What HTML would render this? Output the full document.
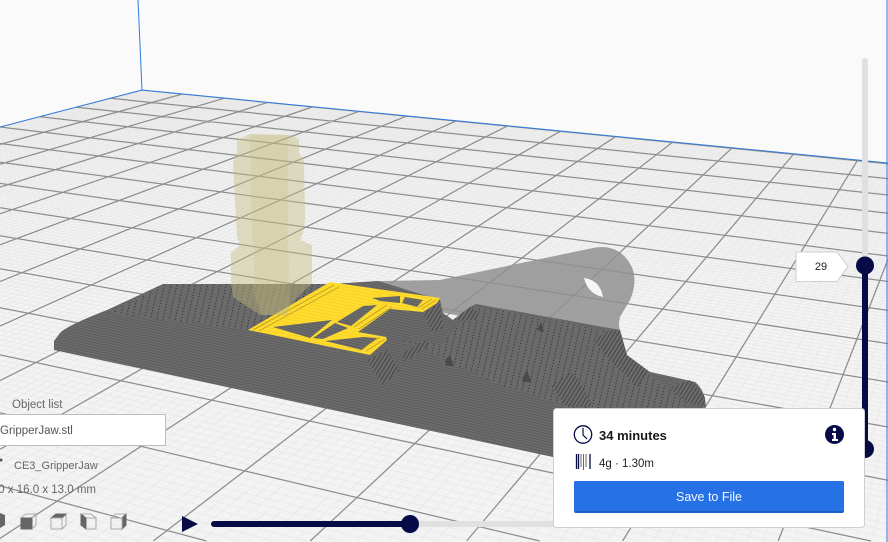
<!DOCTYPE html>
<html><head><meta charset="utf-8">
<style>
html,body{margin:0;padding:0;background:#fafafa;width:888px;height:542px;overflow:hidden}
svg{display:block;position:absolute;left:0;top:0;overflow:hidden}
text{font-family:"Liberation Sans",sans-serif}
</style></head>
<body>
<svg id="s" width="888" height="542" viewBox="0 0 888 542" xmlns="http://www.w3.org/2000/svg">
<defs>
<clipPath id="fl"><polygon points="142,90 888,163 888,542 0,542 0,127"/></clipPath>
<pattern id="st" width="2.600" height="2.600" patternUnits="userSpaceOnUse" patternTransform="rotate(13)">
<rect width="2.600" height="2.600" fill="#6c6c6c"/><rect width="2.600" height=".9" fill="#5c5c5c"/></pattern>
<pattern id="dt" width="6" height="3" patternUnits="userSpaceOnUse" patternTransform="rotate(13)">
<rect width="6" height="3" fill="#6c6c6c"/><rect width="6" height=".7" fill="#666"/><rect x="2" y="1" width="1" height="1" fill="#2a2a2a"/></pattern>
<pattern id="dw" width="3.400" height="3.400" patternUnits="userSpaceOnUse" patternTransform="rotate(-58)">
<rect width="3.400" height="3.400" fill="#6e6e6e"/><rect width="3.400" height="1.300" fill="#4a4a4a"/></pattern>
<pattern id="yl" width="3" height="3" patternUnits="userSpaceOnUse" patternTransform="rotate(10)">
<rect width="3" height="3" fill="#ffdd2e"/><rect width="3" height=".7" fill="#f6cb26"/></pattern>
</defs>
<rect width="888" height="542" fill="#fafafa"/>
<polygon points="142,90 888,163 888,542 0,542 0,127" fill="#f3f3f3"/>
<g clip-path="url(#fl)" fill="none">
<path id="mn" stroke="#e8e8e8" stroke-width=".8"/>
<path id="mj" stroke="#8d8d8d" stroke-width="1.250"/>
</g>
<path d="M138 0L142 90L888 163M142 90L0 127M887 0V542" fill="none" stroke="#2f7be0" stroke-width="1"/>

<!-- translucent rear part -->
<path d="M378 281L440 280L593 248Q603 246 610 248Q626 252 633 270Q637 284 630 300L620 317Q618 325 620 330L480 320L380 300Z" fill="rgb(145,145,145)" fill-opacity=".85"/>
<path d="M584 278Q600 280 603 297Q588 294 584 278Z" fill="#f6f6f6"/>
<!-- plate -->
<path d="M163 284L330 284L378 281L440 300L443 313L453 320L470 307L476 304L620 330L627 355Q634 367 650 372L673 377L695 382Q705 390 706 407L553 457L427 430L323 408L227 387L54 350L54 341L60 333Q66 326 107 310Z" fill="url(#st)"/>
<polygon points="163,284 330,284 250,330 107,313 140,297" fill="url(#dt)"/>
<polygon points="400,340 440,345 476,306 618,332 622,352 650,375 690,405 610,420 500,385" fill="url(#dt)"/>
<polygon points="593,340 610,330 620,330 627,355 650,372 637,387 613,363" fill="url(#dw)"/>
<polygon points="550,385 570,373 577,377 593,407 567,407" fill="url(#dw)"/>
<polygon points="670,388 690,380 705,397 705,407 687,403" fill="url(#dw)"/>
<polygon points="453,320 470,307 478,312 478,320" fill="url(#dw)"/>
<polygon points="423,313 440,303 443,328 432,332" fill="url(#dw)"/>
<polygon points="367,360 387,350 400,370 383,385" fill="url(#dw)"/>
<polygon points="400,355 425,340 430,345 405,362" fill="url(#dw)"/>
<polygon points="537,330 541,322 544,332" fill="#4a4a4a"/>
<polygon points="445,360 450,355 454,366 446,366" fill="#4a4a4a"/>
<polygon points="523,377 527,370 531,382 522,382" fill="#4a4a4a"/>
<!-- yellow layer -->
<path fill-rule="evenodd" fill="url(#yl)" d="M330 282L440 298L437 303L423 312L390 309L358 332L386 337L387 340L370 355L248 330Z
M273 327L332 320L310 338Z M313 338L335 323L348 328L323 339Z M325 341L363 337L377 338L362 350Z M337 322L363 306L377 305L351 326Z M372 298L400 296L400 303L380 301Z M405 297L423 300L417 307L402 303Z"/>
<path d="M253 330L334 285M259 331L339 287M366 351L385 339M360 350L380 337M422 309L436 300M418 308L432 299M354 327L387 305M359 329L392 307" fill="none" stroke="#a58d22" stroke-width=".7"/>
<!-- ghost column -->
<path d="M237 140L250 134L293 135L299 140L299 153L304 160L305 220L303 233L300 240L312 245L312 283L292 303L287 315L260 315L233 297L231 283L231 253L240 245L237 237L233 163L237 153Z" fill="rgb(197,188,126)" fill-opacity=".42"/>
<path d="M250 134L288 135L288 240L290 303L286 315L262 315L254 295L254 245L252 240Z" fill="rgb(197,186,124)" fill-opacity=".22"/>

<!-- vertical slider -->
<path d="M862 61a3 3 0 0 1 6 0V265H862Z" fill="#e0e0e0"/>
<rect x="862" y="265" width="6" height="185" fill="#060a45"/>
<circle cx="865" cy="265.500" r="9" fill="#060a45"/>
<circle cx="865" cy="449" r="9" fill="#060a45"/>
<path d="M796 252H837L848 266.500L837 281.500H796Z" fill="#fff" stroke="#cfcfcf" stroke-width="1"/>
<text x="821" y="270" font-size="11" text-anchor="middle" fill="#222">29</text>

<!-- horizontal slider -->
<polygon points="182,516 198,524 182,532" fill="#060a45"/>
<rect x="410" y="521" width="150" height="6" fill="#e0e0e0"/>
<rect x="211" y="521" width="200" height="6" rx="3" fill="#060a45"/>
<circle cx="410" cy="524" r="9" fill="#060a45"/>

<!-- left panel -->
<text x="12" y="408" font-size="11.500" fill="#666">Object list</text>
<rect x="0" y="414.500" width="165.500" height="31" fill="#fff"/>
<path d="M0 414.500H165.500V445.500H0" fill="none" stroke="#bdbdbd"/>
<text x="0" y="434" font-size="11.500" fill="#555">GripperJaw.stl</text>
<circle cx="1" cy="460" r="1.500" fill="#555"/>
<text x="14" y="469" font-size="11" fill="#666">CE3_GripperJaw</text>
<text x="96" y="493" font-size="11.500" fill="#666" text-anchor="end">0 x 16.0 x 13.0 mm</text>
<g stroke-width="1">
<path d="M0 513L5 515V525L0 528Z" fill="#666"/>
<g transform="translate(20,513)"><path d="M1 5H12V16H1Z" fill="#666" stroke="#666"/><path d="M1 5L6 1H16V12L12 16M12 5L16 1" fill="none" stroke="#aaa"/></g>
<g transform="translate(50,513)"><path d="M1 5L6 1H16L12 5Z" fill="#666" stroke="#666"/><path d="M1 5H12V16H1ZM16 1V12L12 16" fill="none" stroke="#aaa"/></g>
<g transform="translate(80,513)"><path d="M1 1L6 5V16L1 12Z" fill="#666" stroke="#666"/><path d="M1 1H11L16 5H6M16 5V16H6" fill="none" stroke="#aaa"/></g>
<g transform="translate(110,513)"><path d="M12 5L16 1V12L12 16Z" fill="#666" stroke="#666"/><path d="M1 5H12V16H1ZM1 5L6 1H16" fill="none" stroke="#aaa"/></g>
</g>

<!-- print card -->
<rect x="553.500" y="408.500" width="311" height="119" rx="3" fill="#fff" stroke="#cfcfcf"/>
<circle cx="583" cy="434.500" r="8.700" fill="none" stroke="#060a45" stroke-width="1.300"/>
<path d="M583 428V435L587 439" fill="none" stroke="#060a45" stroke-width="1.200"/>
<text x="599" y="440" font-size="13" font-weight="700" fill="#1a1a1a">34 minutes</text>
<circle cx="834.500" cy="434.500" r="9.500" fill="#060a45"/>
<circle cx="834.500" cy="429.500" r="1.700" fill="#fff"/>
<path d="M832 433H836V439H838V441H832V439H833.500V435H832Z" fill="#fff"/>
<path d="M576.500 454V469M578.500 454V469" stroke="#060a45" stroke-width="1.300" fill="none"/>
<path d="M581 454V467M583.500 454V470M586 454V467" stroke="#555" stroke-width=".9" fill="none"/>
<path d="M590 454V469" stroke="#060a45" stroke-width="1.300" fill="none"/>
<text x="599" y="467" font-size="11.500" fill="#222">4g · 1.30m</text>
<rect x="574" y="481" width="270" height="32" rx="2" fill="#1f5fc8"/>
<path d="M574 483a2 2 0 0 1 2-2H842a2 2 0 0 1 2 2V511H574Z" fill="#2671e6"/>
<text x="709" y="501" font-size="12.500" fill="#f4f7ff" text-anchor="middle">Save to File</text>
</svg>
<script>
(function(){
var W=function(u,v){return 1-.01554*u-.03408*v};
var P=function(u,v){var w=W(u,v);return [(37.77*u-35.62*v+142)/w,(2.553*u+4.9*v+90)/w]};
function seg(A,B){
 var t0=0,t1=1,dx=B[0]-A[0],dy=B[1]-A[1];
 var ps=[-dx,dx,-dy,dy],qs=[A[0],888-A[0],A[1],541-A[1]];
 for(var k=0;k<4;k++){
  if(ps[k]==0){if(qs[k]<0)return "";continue;}
  var r=qs[k]/ps[k];
  if(ps[k]<0){if(r>t1)return "";if(r>t0)t0=r;}
  else{if(r<t0)return "";if(r<t1)t1=r;}
 }
 return "M"+(A[0]+t0*dx).toFixed(1)+" "+(A[1]+t0*dy).toFixed(1)+"L"+(A[0]+t1*dx).toFixed(1)+" "+(A[1]+t1*dy).toFixed(1);
}
var a="",b="",i,t,e,s;
for(i=0;i<=400;i++){t=i/10;if(W(t,0)<.06)break;e=(W(t,0)-.06)/.03408;
 s=seg(P(t,0),P(t,e)); if(i%10==0)b+=s; else a+=s;}
for(i=0;i<=400;i++){t=i/10;if(W(0,t)<.06)break;e=(W(0,t)-.06)/.01554;
 s=seg(P(0,t),P(e,t)); if(i%10==0)b+=s; else a+=s;}
document.getElementById("mn").setAttribute("d",a);
document.getElementById("mj").setAttribute("d",b);
})();
</script>
</body></html>
